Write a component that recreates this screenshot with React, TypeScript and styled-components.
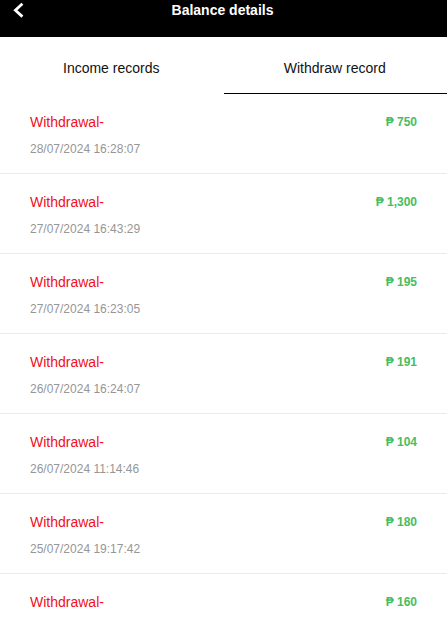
import React, { useState } from 'react';
import styled, { createGlobalStyle } from 'styled-components';

const GlobalStyle = createGlobalStyle`
  * {
    box-sizing: border-box;
  }
  html, body, #root {
    height: 100%;
  }
  body {
    margin: 0;
    background: #fff;
    font-family: "Liberation Sans", Arial, sans-serif;
  }
`;

const Page = styled.div`
  display: flex;
  flex-direction: column;
  height: 100%;
`;

const Header = styled.header`
  display: grid;
  grid-template-columns: 36px 1fr 38px;
  align-items: start;
  flex: none;
  height: 37px;
  background: #000;
  color: #fff;
`;

const BackButton = styled.button`
  display: flex;
  justify-content: center;
  padding: 2px 0 0;
  border: 0;
  background: none;
  color: inherit;
  cursor: pointer;
`;

const Title = styled.h1`
  margin: 0;
  font-size: 14px;
  line-height: 20px;
  font-weight: 700;
  text-align: center;
`;

const Tabs = styled.div`
  display: flex;
  flex: none;
  height: 57px;
`;

const Tab = styled.button<{ $active: boolean }>`
  flex: 1;
  padding: 6px 1px 0 0;
  border: 0;
  border-bottom: 1px solid ${(p) => (p.$active ? '#000' : 'transparent')};
  background: none;
  color: #111;
  font: 14px/20px "Liberation Sans", Arial, sans-serif;
  cursor: pointer;
`;

const List = styled.ul`
  flex: 1;
  min-height: 0;
  margin: 0;
  padding: 0;
  list-style: none;
  overflow-y: auto;
  scrollbar-width: none;
`;

const Row = styled.li`
  display: flex;
  justify-content: space-between;
  height: 80px;
  padding: 18px 30px 0;
  border-bottom: 1px solid #ebebeb;
`;

const Kind = styled.div`
  color: #f01020;
  font-size: 14px;
  line-height: 20px;
`;

const Time = styled.time`
  display: block;
  margin-top: 8px;
  color: #969696;
  font-size: 12px;
  line-height: 18px;
`;

const Amount = styled.strong`
  color: #46bd62;
  font-size: 12px;
  line-height: 20px;
`;

const records = [
  { time: '28/07/2024 16:28:07', amount: '750' },
  { time: '27/07/2024 16:43:29', amount: '1,300' },
  { time: '27/07/2024 16:23:05', amount: '195' },
  { time: '26/07/2024 16:24:07', amount: '191' },
  { time: '26/07/2024 11:14:46', amount: '104' },
  { time: '25/07/2024 19:17:42', amount: '180' },
  { time: '', amount: '160' },
];

const tabs = ['Income records', 'Withdraw record'];

export default function App() {
  const [active, setActive] = useState(1);
  return (
    <Page>
      <GlobalStyle />
      <Header>
        <BackButton type="button" aria-label="Back">
          <svg width="16" height="16" viewBox="0 0 16 16" fill="none" stroke="currentColor" strokeWidth="2.8">
            <path d="M12.4 1.8 5.4 8.2l7 6.4" />
          </svg>
        </BackButton>
        <Title>Balance details</Title>
      </Header>
      <Tabs role="tablist">
        {tabs.map((label, i) => (
          <Tab key={label} type="button" role="tab" aria-selected={i === active} $active={i === active} onClick={() => setActive(i)}>
            {label}
          </Tab>
        ))}
      </Tabs>
      <List>
        {records.map((r, i) => (
          <Row key={i}>
            <div>
              <Kind>Withdrawal-</Kind>
              {r.time && <Time>{r.time}</Time>}
            </div>
            <Amount>₱ {r.amount}</Amount>
          </Row>
        ))}
      </List>
    </Page>
  );
}
